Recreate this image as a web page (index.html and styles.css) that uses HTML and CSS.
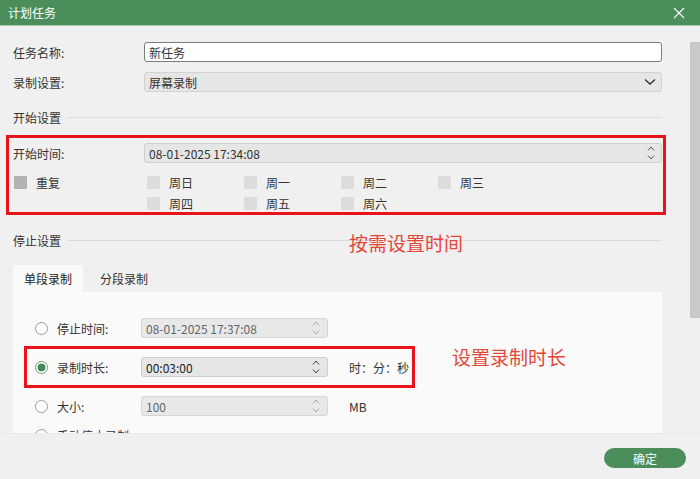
FILE: index.html
```html
<!DOCTYPE html>
<html lang="zh-CN">
<head>
    <meta charset="UTF-8">
    <title>计划任务</title>
    <link rel="stylesheet" href="styles.css">
</head>
<body>
    <div class="dialog">
        <div class="titlebar">
            <span class="title">计划任务</span>
            <svg class="close" width="12" height="12" viewBox="0 0 12 12">
                <path d="M1 1 L11 11 M11 1 L1 11" stroke="#fff" stroke-width="1.1" fill="none"/>
            </svg>
        </div>

        <div class="content">
            <div class="form">
                <div class="row">
                    <span class="label">任务名称:</span>
                    <div class="field text">新任务</div>
                </div>
                <div class="row">
                    <span class="label">录制设置:</span>
                    <div class="field select">
                        <span>屏幕录制</span>
                        <svg width="12" height="8" viewBox="0 0 12 8"><path d="M1 1.5 L6 6 L11 1.5" stroke="#333" stroke-width="1.4" fill="none"/></svg>
                    </div>
                </div>

                <div class="section"><span>开始设置</span><i class="rule"></i></div>

                <div class="row start">
                    <span class="label">开始时间:</span>
                    <div class="field spin">
                        <span>08-01-2025 17:34:08</span>
                        <span class="arrows">
                            <svg width="8" height="5" viewBox="0 0 8 5"><path d="M1 4.5 L4 1 L7 4.5" stroke="#555" fill="none"/></svg>
                            <svg width="8" height="5" viewBox="0 0 8 5"><path d="M1 0.5 L4 4 L7 0.5" stroke="#555" fill="none"/></svg>
                        </span>
                    </div>
                </div>

                <div class="repeat">
                    <div class="repeat-toggle">
                        <span class="box dark"></span>
                        <span>重复</span>
                    </div>
                    <div class="days">
                        <div class="day"><span class="box"></span>周日</div>
                        <div class="day"><span class="box"></span>周一</div>
                        <div class="day"><span class="box"></span>周二</div>
                        <div class="day"><span class="box"></span>周三</div>
                        <div class="day"><span class="box"></span>周四</div>
                        <div class="day"><span class="box"></span>周五</div>
                        <div class="day"><span class="box"></span>周六</div>
                    </div>
                </div>

                <div class="section stop"><span>停止设置</span><i class="rule"></i></div>

                <div class="tabs">
                    <span class="tab active">单段录制</span>
                    <span class="tab">分段录制</span>
                </div>

                <div class="panel">
                    <div class="opt">
                        <span class="radio"></span>
                        <span class="opt-label">停止时间:</span>
                        <div class="field spin off">
                            <span>08-01-2025 17:37:08</span>
                            <span class="arrows">
                                <svg width="8" height="5" viewBox="0 0 8 5"><path d="M1 4.5 L4 1 L7 4.5" stroke="#aaa" fill="none"/></svg>
                                <svg width="8" height="5" viewBox="0 0 8 5"><path d="M1 0.5 L4 4 L7 0.5" stroke="#aaa" fill="none"/></svg>
                            </span>
                        </div>
                    </div>
                    <div class="opt">
                        <span class="radio on"></span>
                        <span class="opt-label">录制时长:</span>
                        <div class="field spin dur">
                            <span>00:03:00</span>
                            <span class="arrows">
                                <svg width="8" height="5" viewBox="0 0 8 5"><path d="M1 4.5 L4 1 L7 4.5" stroke="#444" fill="none"/></svg>
                                <svg width="8" height="5" viewBox="0 0 8 5"><path d="M1 0.5 L4 4 L7 0.5" stroke="#444" fill="none"/></svg>
                            </span>
                        </div>
                        <span class="unit">时：分：秒</span>
                    </div>
                    <div class="opt">
                        <span class="radio"></span>
                        <span class="opt-label">大小:</span>
                        <div class="field spin off">
                            <span>100</span>
                            <span class="arrows">
                                <svg width="8" height="5" viewBox="0 0 8 5"><path d="M1 4.5 L4 1 L7 4.5" stroke="#aaa" fill="none"/></svg>
                                <svg width="8" height="5" viewBox="0 0 8 5"><path d="M1 0.5 L4 4 L7 0.5" stroke="#aaa" fill="none"/></svg>
                            </span>
                        </div>
                        <span class="unit">MB</span>
                    </div>
                    <div class="opt last">
                        <span class="radio"></span>
                        <span class="opt-label">手动停止录制</span>
                    </div>
                </div>
            </div>

            <div class="scrollbar"><div class="thumb"></div></div>
        </div>

        <div class="footer">
            <button class="ok">确定</button>
        </div>

        <!-- callouts -->
        <div class="mark mark-start"></div>
        <div class="note note-start">按需设置时间</div>
        <div class="mark mark-dur"></div>
        <div class="note note-dur">设置录制时长</div>
    </div>
</body>
</html>
```

FILE: styles.css
```css
* {
    margin: 0;
    padding: 0;
    box-sizing: border-box;
}

body {
    font-family: "Noto Sans CJK SC", "Noto Sans", sans-serif;
    font-size: 12px;
    color: #333;
    background: #f0f0f0;
}

.dialog {
    position: relative;
    width: 700px;
    height: 479px;
    overflow: hidden;
    background: #f0f0f0;
}

.titlebar {
    height: 26px;
    background: #4b8e5c;
    border-bottom: 1px solid #a9cdb2;
    display: flex;
    align-items: center;
    justify-content: space-between;
    padding: 0 15px 0 8px;
    color: #fff;
}

.content {
    height: 407px;
    display: flex;
    overflow: hidden;
}

.form {
    width: 662px;
    padding: 16px 0 0 13px;
    display: flex;
    flex-direction: column;
}

.row {
    display: flex;
    align-items: center;
    height: 20px;
    margin-bottom: 10px;
}

.label {
    width: 131px;
    flex-shrink: 0;
}

.field {
    flex: 1;
    height: 20px;
    border-radius: 3px;
    display: flex;
    align-items: center;
    justify-content: space-between;
    padding: 0 5px 0 4px;
}

.field.text {
    background: #fff;
    border: 1px solid #7b7b7b;
}

.field.select {
    background: #e6e6e6;
    border: 1px solid #d2d2d2;
}

.field.spin {
    background: #e6e6e6;
    border: 1px solid #cfcfcf;
}

.arrows {
    display: flex;
    flex-direction: column;
    gap: 4px;
    padding-right: 1px;
}

.arrows svg {
    display: block;
}

.section {
    display: flex;
    align-items: center;
    height: 16px;
    margin-top: 7px;
}

.section .rule {
    flex: 1;
    height: 1px;
    background: #dcdcdc;
    margin-left: 6px;
}

.row.start {
    margin-top: 18px;
    margin-bottom: 0;
}

.repeat {
    display: flex;
    margin-top: 13px;
}

.repeat-toggle {
    width: 131px;
    display: flex;
    align-items: flex-start;
    gap: 9px;
    padding-left: 1px;
    line-height: 13px;
}

.box {
    width: 13px;
    height: 13px;
    background: #dcdcdc;
    border-radius: 1px;
    flex-shrink: 0;
}

.box.dark {
    background: #b2b2b2;
}

.days {
    margin-left: 3px;
    display: grid;
    grid-template-columns: repeat(4, 97px);
    row-gap: 8px;
}

.day {
    display: flex;
    align-items: center;
    gap: 9px;
    line-height: 13px;
}

.section.stop {
    margin-top: 22px;
}

.tabs {
    display: flex;
    margin-top: 17px;
    height: 27px;
    gap: 6px;
}

.tab {
    padding: 0 11px;
    line-height: 27px;
    border-radius: 3px 3px 0 0;
}

.tab.active {
    background: #fafafa;
    color: #222;
}

.panel {
    background: #fafafa;
    padding: 26px 0 0 22px;
    flex: 1;
}

.opt {
    display: flex;
    align-items: center;
    height: 20px;
    margin-bottom: 19px;
}

.opt.last {
    margin-top: -10px;
}

.radio {
    width: 13px;
    height: 13px;
    border-radius: 50%;
    border: 1px solid #9a9a9a;
    background: #fff;
    flex-shrink: 0;
}

.radio.on {
    border-color: #6f9c7b;
    background: radial-gradient(circle, #3f8a55 0 3.6px, #fff 4.3px);
}

.opt-label {
    margin-left: 9px;
    width: 84px;
    white-space: nowrap;
}

.opt .field {
    flex: none;
    width: 187px;
    padding-left: 4px;
    padding-right: 6px;
}

.field.off {
    background: #e8e8e8;
    border-color: #d5d5d5;
    color: #666;
}

.field.dur {
    background: #e6e6e6;
    border-color: #cdcdcd;
    color: #222;
}

.unit {
    margin-left: 21px;
}

.scrollbar {
    margin-left: 28px;
    margin-top: 16px;
    width: 10px;
}

.thumb {
    height: 276px;
    background: #c9c9c9;
}

.footer {
    height: 46px;
    border-top: 1px solid #e8e8e8;
    display: flex;
    justify-content: flex-end;
    align-items: flex-start;
    padding: 14px 14px 0 0;
}

.ok {
    width: 82px;
    height: 20px;
    border: none;
    border-radius: 10px;
    background: #4b8e5c;
    color: #fff;
    font-family: inherit;
    font-size: 12px;
}

/* red callout frames and captions */
.mark {
    position: absolute;
    border: 3px solid #e8131b;
}

.mark-start {
    left: 6px;
    top: 135px;
    width: 660px;
    height: 80px;
}

.mark-dur {
    left: 24px;
    top: 346px;
    width: 391px;
    height: 42px;
}

.note {
    position: absolute;
    color: #e2483a;
    font-size: 19px;
    line-height: 22px;
}

.note-start {
    left: 349px;
    top: 232px;
}

.note-dur {
    left: 452px;
    top: 346px;
}
```
